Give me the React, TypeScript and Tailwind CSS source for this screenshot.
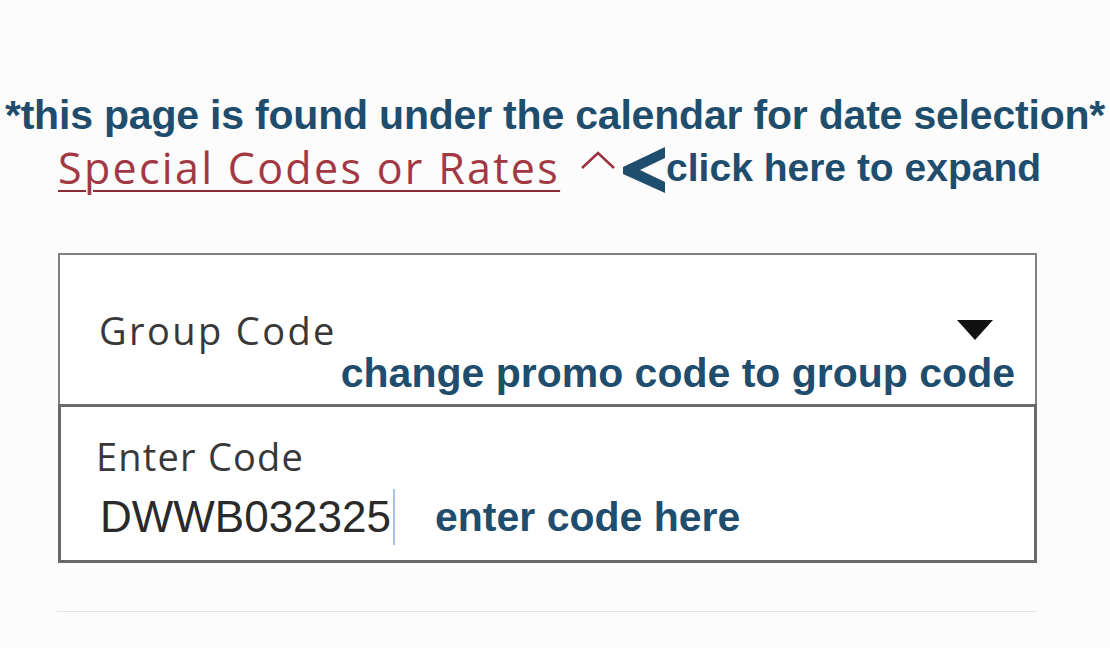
export default function App() {
  return (
    <div className="w-[1110px] h-[648px] bg-[#fcfcfc] overflow-hidden flex flex-col">
      {/* annotation heading */}
      <p className="pt-[95px] text-center text-[41px] leading-none font-bold text-[#1f4d6d] font-['Liberation_Sans',Arial,sans-serif] tracking-[-0.2px] whitespace-nowrap">
        *this page is found under the calendar for date selection*
      </p>

      {/* expand link row */}
      <div className="flex items-center pl-[58px] mt-[5px] h-[52px]">
        <span className="text-[43px] leading-none font-normal text-[#a13844] underline decoration-[#8a2c36] decoration-2 underline-offset-[6px] font-['Open_Sans',sans-serif] tracking-[2.3px] whitespace-nowrap">
          Special Codes or Rates
        </span>
        <svg className="ml-[20px] mb-[14px]" width="36" height="20" viewBox="0 0 36 20">
          <polyline points="2,18 18,3 34,18" fill="none" stroke="#9b3040" strokeWidth="2.5" />
        </svg>
        {/* pointer arrow */}
        <svg className="ml-[7px] mt-[6px]" width="42" height="46" viewBox="0 0 42 46">
          <polygon points="0,20 42,0 42,11 17,23 42,35 42,46 0,27" fill="#1f4d6d" />
        </svg>
        <span className="ml-[1px] text-[39px] leading-none font-bold text-[#1f4d6d] font-['Liberation_Sans',Arial,sans-serif] whitespace-nowrap">
          click here to expand
        </span>
      </div>

      {/* code form */}
      <div className="ml-[58px] mt-[60px] w-[979px] flex flex-col">
        <div className="h-[153px] border-2 border-[#808080] bg-white flex flex-col">
          <div className="flex items-center justify-between pl-[39px] pr-[42px] pt-[56px]">
            <span className="text-[38px] leading-none text-[#383838] font-['Open_Sans',sans-serif] tracking-[2.4px]">Group Code</span>
            <svg width="36" height="20" viewBox="0 0 36 20">
              <polygon points="0,0 36,0 18,20" fill="#111" />
            </svg>
          </div>
          <div className="flex justify-end pr-[20px] mt-[4px]">
            <span className="text-[41px] leading-none font-bold text-[#1f4d6d] font-['Liberation_Sans',Arial,sans-serif] whitespace-nowrap">
              change promo code to group code
            </span>
          </div>
        </div>
        <div className="-mt-[2px] h-[159px] border-[3px] border-[#6a6a6a] bg-white flex flex-col pl-[35px] pt-[30px]">
          <span className="text-[38px] leading-none text-[#383838] font-['Open_Sans',sans-serif] tracking-[1.2px]">Enter Code</span>
          <div className="flex items-center mt-[14px]">
            <span className="text-[44px] leading-none text-[#2a2a2a] font-['Liberation_Sans',Arial,sans-serif] ml-[4px]">DWWB032325</span>
            <span className="w-[2px] h-[56px] bg-[#a8c2e6] ml-[2px]" />
            <span className="ml-[40px] text-[41px] leading-none font-bold text-[#1f4d6d] font-['Liberation_Sans',Arial,sans-serif] whitespace-nowrap">
              enter code here
            </span>
          </div>
        </div>
      </div>

      <div className="ml-[57px] mt-[48px] w-[980px] h-px bg-[#e4e4e4]" />
    </div>
  );
}
